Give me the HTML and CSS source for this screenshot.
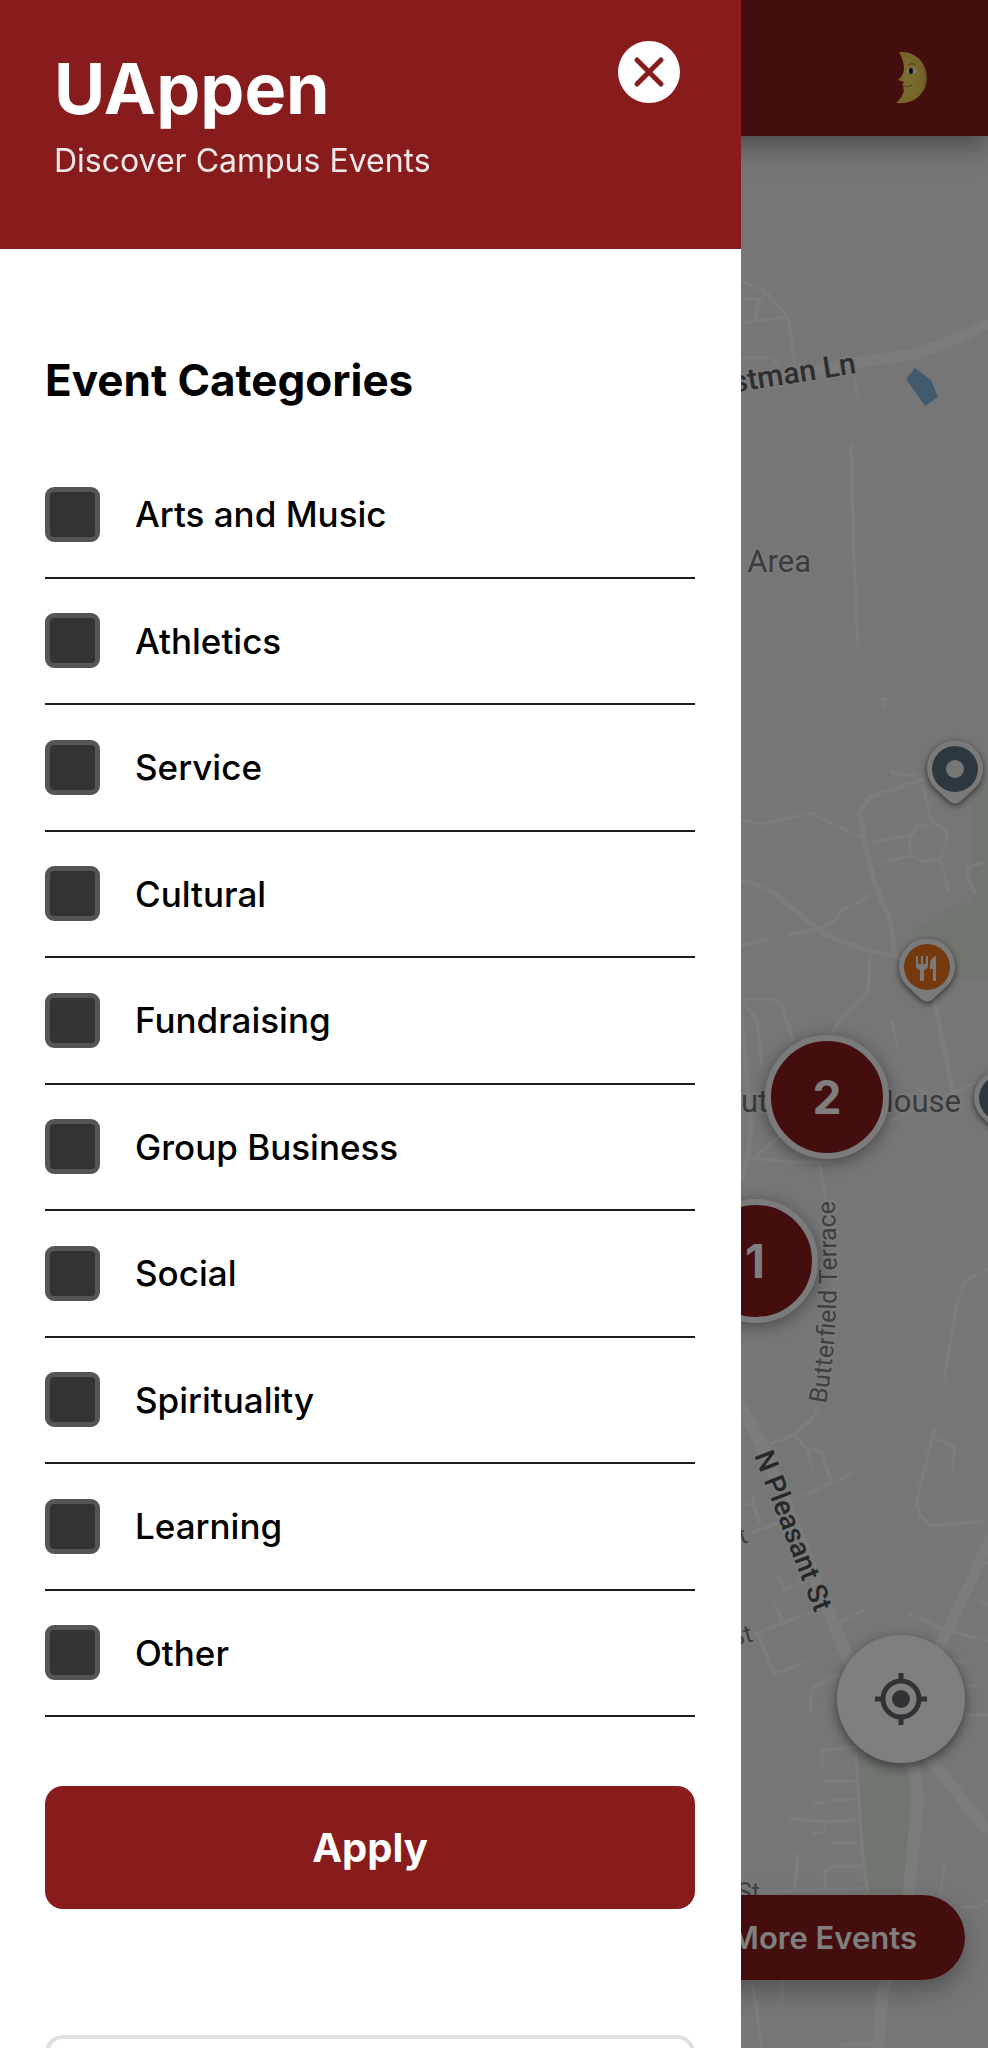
FILE: index.html
```html
<!DOCTYPE html>
<html lang="en">
<head>
<meta charset="utf-8">
<meta name="viewport" content="width=device-width, initial-scale=1">
<title>UAppen</title>
<link rel="stylesheet" href="styles.css">
</head>
<body>
<div class="app">
  <main class="map">
    <svg class="map-canvas" viewBox="0 0 988 2048" preserveAspectRatio="xMaxYMin slice" role="img" aria-label="Campus map">
      <rect width="988" height="2048" fill="#ececec"/>
      <!-- parks and water -->
      <g fill="#e3eae0">
        <path d="M988 780L972 790V902L955 905L912 930L920 960L955 978H988Z"/>
        <path d="M856 1755L868 1895H904L911 1795L905 1755Z"/>
      </g>
      <path d="M915 368L931 380L938 397L925 406L906 379Z" fill="#84b4dc"/>
      <!-- minor streets -->
      <g class="street">
        <path d="M741 281L766 292L788 317L795 363M741 299H761M765 293L757 307L755 320M741 323L788 317M741 358H772L778 364M855 378L858 398"/>
        <path d="M851 443L854 560L858 647M880 699H886L884 709"/>
        <path d="M890 770L895 774L918 775M922 785L932 822L946 830L947 840L940 859L925 862L911 855L909 838L918 826L932 825M869 843L909 835M876 865L911 855M940 859L948 886V893"/>
        <path d="M741 820L762 824L811 813L862 838M871 894L863 900L840 911L836 920L821 928L788 935M741 946L768 939"/>
        <path d="M984 862L967 867L968 880L976 894M870 955L868 992L840 1020L829 1038M743 999H772L781 1005L793 1040M744 1003L757 1020L762 1065M891 1020L897 1045"/>
      </g>
      <g class="street street-wide">
        <path d="M924 779L870 797L859 813L874 882L890 920L895 957"/>
        <path d="M741 880L770 890L824 934L860 948L897 957L925 975L934 1000L954 1096"/>
        <path d="M741 1015L751 1130L747 1160L741 1180"/>
      </g>
      <g class="street">
        <path d="M741 1157L790 1162H830M757 1155L800 1120M890 1121L910 1112L976 1082M915 1087L930 1095M988 1269L966 1280L958 1300L944 1380"/>
        <path d="M819 1162L826 1203M818 1405L812 1419L793 1435L770 1444"/>
        <path d="M795 1436L808 1450L812 1471M808 1448L821 1452L832 1484M793 1500L854 1473M741 1507L753 1503L760 1524M753 1503L754 1494"/>
        <path d="M748 1534L778 1523M778 1574L784 1589L804 1582M775 1604L782 1620M754 1634L815 1611M758 1634L774 1674L804 1663M838 1622L864 1610"/>
        <path d="M935 1427L916 1503L920 1515L931 1526L984 1521M934 1438L955 1446L952 1469M907 1613L946 1630L988 1641M980 1601L988 1605M950 1659L970 1664M966 1686H976M964 1715H988M980 1563H988"/>
        <path d="M811 1714V1690L825 1680L840 1675M822 1770V1750L855 1747M824 1781H855M814 1804L835 1800L856 1799M789 1818L825 1822L857 1820M827 1822L824 1833H812M832 1843H857M856 1753L862 1850L868 1892M798 1853L795 1888M825 1888V1871L835 1866H862M760 1892L865 1888M945 1865L940 1895M960 1907H978L988 1900M752 1980L762 2048M782 1980V2001M842 2048V2044H875"/>
      </g>
      <!-- main roads -->
      <g class="road">
        <path d="M741 385L795 374L860 362L915 354Q945 345 988 324" stroke-width="11"/>
        <path d="M738 1400L764 1450L830 1615L866 1700L915 1770L918 1800L908 1900L883 1990L878 2048" stroke-width="12"/>
        <path d="M992 1536L938 1650L915 1740L988 1832" stroke-width="11"/>
      </g>
      <!-- labels -->
      <g class="label">
        <text class="label-road" x="857" y="373" text-anchor="end" transform="rotate(-9 857 373)">Eastman Ln</text>
        <text x="811" y="572" text-anchor="end">Recreation Area</text>
        <text x="961" y="1112" text-anchor="end">Butterfield House</text>
        <path id="terrace" d="M826 1404Q843 1310 833 1180" fill="none"/>
        <text class="label-street"><textPath href="#terrace">Butterfield Terrace</textPath></text>
        <text class="label-road label-main" x="754" y="1455" transform="rotate(69 754 1455)">N Pleasant St</text>
        <text class="label-street" x="749" y="1542" text-anchor="end" transform="rotate(-20 749 1542)">St</text>
        <text class="label-street" x="754" y="1641" text-anchor="end" transform="rotate(-16 754 1641)">St</text>
        <text class="label-street" x="760" y="1901" text-anchor="end">St</text>
      </g>
      <!-- place pins -->
      <defs>
        <path id="pin" d="M-20 19A28 28 0 1 1 20 19L6 32Q0 37-6 32Z"/>
      </defs>
      <g class="pin" transform="translate(955 769)">
        <use href="#pin"/><circle r="23" fill="#5b717c"/><circle r="9" fill="#ececec"/>
      </g>
      <g class="pin" transform="translate(1002 1098)">
        <use href="#pin"/><circle r="23" fill="#5b717c"/><circle r="9" fill="#ececec"/>
      </g>
      <g class="pin" transform="translate(927 967)">
        <use href="#pin"/><circle r="23" fill="#e8731a"/>
        <path d="M-11-11V-2Q-11 2-7 3V14H-3V3Q1 2 1-2V-11H-1V-3H-4V-11H-6V-3H-9V-11ZM9-11Q3-9 3-2V2H6V14H9Z"/>
      </g>
      <!-- event clusters -->
      <g class="cluster">
        <circle cx="827" cy="1097" r="59"/><text x="827" y="1114">2</text>
        <circle cx="756" cy="1261" r="59"/><text x="755" y="1278">1</text>
      </g>
    </svg>
    <div class="map-actions">
      <button class="locate" type="button" aria-label="Show my location">
        <svg viewBox="0 0 52 52" width="52" height="52" fill="none" stroke="#62656a" stroke-width="5">
          <circle cx="26" cy="26" r="18"/>
          <circle cx="26" cy="26" r="9" fill="#62656a" stroke="none"/>
          <path d="M26 0V8M26 44V52M0 26H8M44 26H52"/>
        </svg>
      </button>
      <button class="more" type="button">More Events</button>
    </div>
  </main>

  <header class="topbar">
    <button class="theme" type="button" aria-label="Toggle dark mode">
      <svg viewBox="0 0 32 52" width="32" height="52">
        <defs>
          <radialGradient id="glow" cx=".35" cy=".5" r=".65">
            <stop offset="0" stop-color="#f5d968"/><stop offset=".8" stop-color="#eccb52"/><stop offset="1" stop-color="#c99b34"/>
          </radialGradient>
        </defs>
        <path fill="url(#glow)" d="M3 0C20-1 31 11 31 26S18 53 0 51Q7 45 8 38Q6 36 8 34L6 33L8 30L2 28Q7 24 8 18Q8 8 3 0Z"/>
        <ellipse cx="16" cy="19" rx="5" ry="3" fill="#f2f2f2"/>
        <ellipse cx="15" cy="19" rx="2" ry="3" fill="#151515"/>
        <path d="M12 13Q16 10 20 13M8 34Q12 36 16 33" fill="none" stroke="#a57b25"/>
      </svg>
    </button>
  </header>

  <div class="scrim"></div>

  <aside class="drawer" aria-label="Event filters">
    <div class="drawer-head">
      <div class="brand">
        <h1>UAppen</h1>
        <p>Discover Campus Events</p>
      </div>
      <button class="close" type="button" aria-label="Close">
        <svg viewBox="0 0 62 62" width="62" height="62" fill="none" stroke="#881b1c" stroke-width="5" stroke-linecap="round">
          <path d="M19 19L43 43M43 19L19 43"/>
        </svg>
      </button>
    </div>
    <form class="filters">
      <h2>Event Categories</h2>
      <div class="categories">
        <label class="category"><input type="checkbox"><span>Arts and Music</span></label>
        <label class="category"><input type="checkbox"><span>Athletics</span></label>
        <label class="category"><input type="checkbox"><span>Service</span></label>
        <label class="category"><input type="checkbox"><span>Cultural</span></label>
        <label class="category"><input type="checkbox"><span>Fundraising</span></label>
        <label class="category"><input type="checkbox"><span>Group Business</span></label>
        <label class="category"><input type="checkbox"><span>Social</span></label>
        <label class="category"><input type="checkbox"><span>Spirituality</span></label>
        <label class="category"><input type="checkbox"><span>Learning</span></label>
        <label class="category"><input type="checkbox"><span>Other</span></label>
      </div>
      <button class="apply" type="button">Apply</button>
      <input class="search" type="text" aria-label="Search">
    </form>
  </aside>
</div>
</body>
</html>
```
FILE: styles.css
```css
* { box-sizing: border-box; }

body {
  margin: 0;
  font-family: Inter, "Liberation Sans", sans-serif;
  color: #000;
}

button { font: inherit; border: 0; padding: 0; }

.app {
  position: relative;
  height: 100vh;
  overflow: hidden;
}

.map, .scrim { position: absolute; inset: 0; }

.map-canvas { display: block; width: 100%; height: 100%; }

.street, .road {
  fill: none;
  stroke: #f9f9f9;
  stroke-width: 3;
  stroke-linejoin: round;
}
.street-wide { stroke-width: 5; }

.label {
  font-family: Roboto, "Liberation Sans", sans-serif;
  font-size: 31px;
  fill: #74777b;
}
.label text {
  paint-order: stroke;
  stroke: #f4f4f4;
  stroke-width: 4px;
}
.label .label-road { font-size: 30px; font-weight: 500; fill: #5a5d61; }
.label .label-main { font-size: 28px; fill: #4c4f53; }
.label .label-street { font-size: 25px; fill: #7c7f82; }

.pin { fill: #f5f5f5; filter: drop-shadow(0 2px 3px rgba(0, 0, 0, .6)); }

.cluster circle {
  fill: #881b1c;
  stroke: #f7f7f7;
  stroke-width: 6px;
  filter: drop-shadow(0 3px 8px rgba(0, 0, 0, .4));
}
.cluster text {
  font-size: 46px;
  font-weight: 700;
  text-anchor: middle;
  fill: #fff;
}

.map-actions {
  position: absolute;
  right: 23px;
  bottom: 68px;
  display: flex;
  flex-direction: column;
  align-items: flex-end;
  gap: 132px;
}
.locate {
  display: grid;
  place-items: center;
  width: 128px;
  height: 128px;
  border-radius: 50%;
  background: #fff;
  box-shadow: 0 4px 12px rgba(0, 0, 0, .5);
}
.more {
  height: 85px;
  padding: 0 48px;
  border-radius: 43px;
  background: #881b1c;
  color: #fff;
  font-size: 31px;
  font-weight: 600;
  box-shadow: 0 10px 24px rgba(0, 0, 0, .3);
}

.topbar {
  position: relative;
  display: flex;
  justify-content: flex-end;
  align-items: flex-end;
  height: 136px;
  padding: 0 60px 32px;
  background: #881b1c;
  box-shadow: 0 8px 28px rgba(0, 0, 0, .4);
}
.theme { background: none; }
.theme svg, .close svg { display: block; }

.scrim { background: rgba(0, 0, 0, .5); }

.drawer {
  position: absolute;
  inset: 0 auto 0 0;
  width: 75%;
  overflow: hidden;
  background: #fff;
}
.drawer-head {
  display: flex;
  justify-content: space-between;
  align-items: flex-start;
  height: 249px;
  padding: 41px 61px 0 54px;
  background: #881b1c;
  color: #fff;
}
.brand h1 {
  margin: 6px 0 0;
  font-size: 70px;
  line-height: 84px;
  font-weight: 700;
}
.brand p {
  margin: 10px 0 0;
  font-size: 32px;
  line-height: 40px;
  opacity: .9;
}
.close { border-radius: 50%; background: #fff; }

.filters { padding: 103px 46px 0 45px; }
.filters h2 {
  margin: 0 0 44px;
  font-size: 44px;
  line-height: 56px;
  font-weight: 700;
}
.categories {
  display: grid;
  grid-auto-rows: 1fr;
  height: 1265px;
}
.category {
  display: flex;
  align-items: center;
  gap: 35px;
  border-bottom: 2px solid #1c1d1f;
  font-size: 35px;
  font-weight: 500;
}
.category input {
  appearance: none;
  width: 55px;
  height: 55px;
  margin: 0;
  border: 5px solid #555;
  border-radius: 9px;
  background: #333;
}
.apply {
  display: block;
  width: 100%;
  height: 123px;
  margin: 69px 0 126px;
  border-radius: 18px;
  background: #881b1c;
  color: #fff;
  font-size: 40px;
  font-weight: 700;
}
.search {
  display: block;
  width: 100%;
  height: 110px;
  border: 4px solid #e0e0e0;
  border-radius: 18px;
  background: #fff;
  font: inherit;
}
```
